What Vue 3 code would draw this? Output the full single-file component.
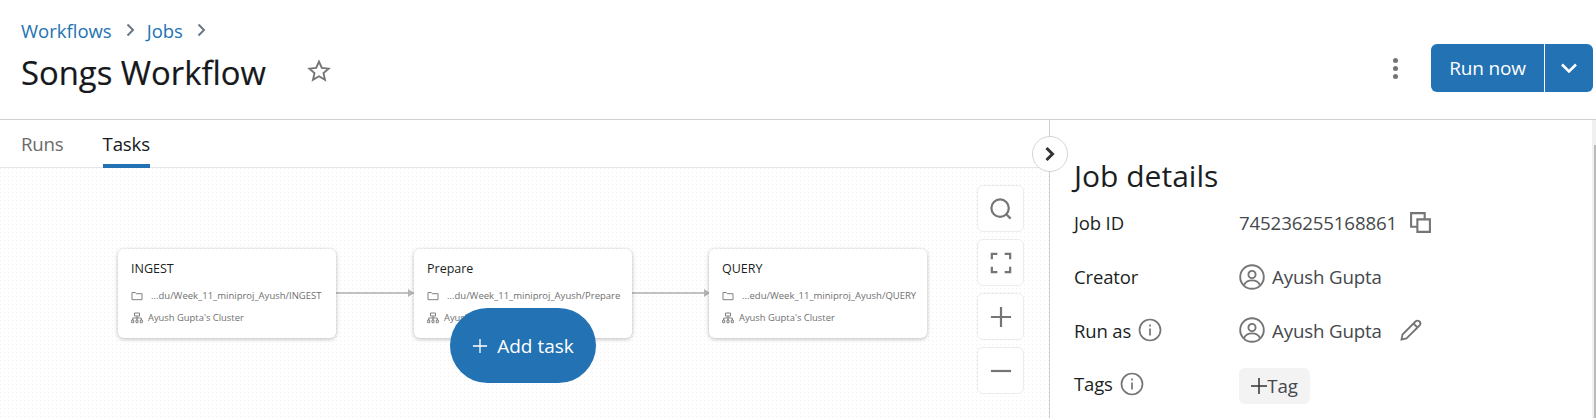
<script setup>
const nodes = [
  { name: 'INGEST', path: '...du/Week_11_miniproj_Ayush/INGEST', x: 118 },
  { name: 'Prepare', path: '...du/Week_11_miniproj_Ayush/Prepare', x: 414 },
  { name: 'QUERY', path: '...edu/Week_11_miniproj_Ayush/QUERY', x: 709 },
]
const links = [336, 632]
</script>

<template>
  <div class="page">
    <header class="head">
      <div class="head-left">
        <nav class="crumbs">
          <a>Workflows</a>
          <svg class="chev" viewBox="0 0 10 14"><path d="M1.500 1.500L7 7l-5.500 5.500" /></svg>
          <a>Jobs</a>
          <svg class="chev" viewBox="0 0 10 14"><path d="M1.500 1.500L7 7l-5.500 5.500" /></svg>
        </nav>
        <div class="title-row">
          <h1>Songs Workflow</h1>
          <svg class="star" viewBox="0 0 24 24"><path d="M12 2.600l2.800 6.300 6.800.7-5.100 4.500 1.500 6.700-6-3.500-6 3.500 1.500-6.700-5.100-4.500 6.800-.7z" /></svg>
        </div>
      </div>
      <div class="head-right">
        <div class="kebab"><i></i><i></i><i></i></div>
        <div class="run">
          <span class="run-main">Run now</span>
          <span class="run-caret"><svg viewBox="0 0 18 12"><path d="M2 2.500l7 7 7-7" /></svg></span>
        </div>
      </div>
    </header>

    <div class="body">
      <main class="main">
        <div class="tabs">
          <span class="tab">Runs</span>
          <span class="tab active">Tasks</span>
        </div>
        <div class="canvas">
          <div v-for="l in links" :key="l" class="link" :style="{ left: l + 'px' }"><b></b></div>
          <div v-for="n in nodes" :key="n.name" class="node" :style="{ left: n.x + 'px' }">
            <div class="node-name">{{ n.name }}</div>
            <div class="node-line">
              <svg class="ni" viewBox="0 0 12 12"><path d="M1 2.500h3.300l1 1.200H11v6H1z" /></svg>
              <span class="path">{{ n.path }}</span>
            </div>
            <div class="node-line">
              <svg class="ni" viewBox="0 0 12 12"><path d="M3.500 1h5v3h-5zM1.700 6h8.600M1.700 6v2M6 4v4M10.300 6v2M.7 8h2v2.700h-2zM5 8h2v2.700H5zM9.300 8h2v2.700h-2z" /></svg>
              <span class="path cl">Ayush Gupta's Cluster</span>
            </div>
          </div>
          <div class="add">
            <svg viewBox="0 0 18 18"><path d="M9 1v16M1 9h16" /></svg>
            <span>Add task</span>
          </div>
          <div class="tools">
            <div class="tool"><svg viewBox="0 0 24 24"><circle cx="11" cy="11" r="9.500" /><path d="M18 18l4.500 4.500" /></svg></div>
            <div class="tool"><svg viewBox="0 0 24 24"><path d="M2 8V2h6M16 2h6v6M22 16v6h-6M8 22H2v-6" /></svg></div>
            <div class="tool"><svg viewBox="0 0 24 24"><path d="M12 1v22M1 12h22" /></svg></div>
            <div class="tool"><svg viewBox="0 0 24 24"><path d="M1 12h22" /></svg></div>
          </div>
        </div>
      </main>

      <aside class="side">
        <button class="collapse"><svg viewBox="0 0 12 16"><path d="M2.500 2l6 6-6 6" /></svg></button>
        <h2>Job details</h2>
        <div class="row">
          <div class="label">Job ID</div>
          <div class="val">
            <span>745236255168861</span>
            <svg class="copy" viewBox="0 0 22 22"><path d="M8 15H2V2h13v6" /><path d="M8 8h12v12H8z" /></svg>
          </div>
        </div>
        <div class="row">
          <div class="label">Creator</div>
          <div class="val">
            <svg class="user" viewBox="0 0 26 26"><circle cx="13" cy="13" r="11.800" /><circle cx="13" cy="10.500" r="3.600" /><path d="M5 21c1.500-3.200 4.500-4.600 8-4.600s6.500 1.400 8 4.600" /></svg>
            <span>Ayush Gupta</span>
          </div>
        </div>
        <div class="row">
          <div class="label">Run as
            <svg class="info" viewBox="0 0 24 24"><circle cx="12" cy="12" r="10.500" /><path d="M12 10.500v7M12 6.500v2" /></svg>
          </div>
          <div class="val">
            <svg class="user" viewBox="0 0 26 26"><circle cx="13" cy="13" r="11.800" /><circle cx="13" cy="10.500" r="3.600" /><path d="M5 21c1.500-3.200 4.500-4.600 8-4.600s6.500 1.400 8 4.600" /></svg>
            <span>Ayush Gupta</span>
            <svg class="pencil" viewBox="0 0 22 22"><path d="M1.500 20.500l1-5L15.500 2.500a2.500 2.500 0 0 1 4 4L6.500 19.500zM13.500 4.500l4 4" /></svg>
          </div>
        </div>
        <div class="row">
          <div class="label">Tags
            <svg class="info" viewBox="0 0 24 24"><circle cx="12" cy="12" r="10.500" /><path d="M12 10.500v7M12 6.500v2" /></svg>
          </div>
          <div class="val">
            <span class="tag"><svg viewBox="0 0 16 16"><path d="M8 0v16M0 8h16" /></svg>Tag</span>
          </div>
        </div>
        <div class="scroll"><div class="thumb"></div></div>
      </aside>
    </div>
  </div>
</template>

<style>
html, body { margin: 0; background: #fff; overflow: hidden; }
</style>

<style scoped>
.page {
  width: 1596px; height: 418px; overflow: hidden; display: flex; flex-direction: column;
  font-family: "Open Sans", "Noto Sans", sans-serif; color: #1b1f23;
}
svg { fill: none; stroke: #757575; display: block; flex: none; }
.head {
  height: 120px; flex: none; box-sizing: border-box; border-bottom: 1px solid #cfcfcf;
  display: flex; justify-content: space-between; padding: 0 3px 0 21px;
}
.crumbs { display: flex; align-items: center; margin-top: 18px; height: 24px; font-size: 18.500px; color: #2272b4; }
.chev { width: 10px; height: 14px; margin: 0 11px 0 14px; stroke: #6b7885; stroke-width: 2; }
.title-row { display: flex; align-items: center; margin-top: 8px; height: 44px; }
h1 { margin: 0; font-size: 32.800px; font-weight: 500; color: #16191c; width: 286px; -webkit-text-stroke: .2px #16191c; }
.star { width: 24px; height: 24px; stroke-width: 1.900; margin-top: -2px; }
.head-right { display: flex; align-items: flex-start; }
.kebab { display: flex; flex-direction: column; gap: 3px; margin: 58px 33px 0 0; }
.kebab i { width: 5px; height: 5px; border-radius: 50%; background: #757575; display: block; }
.run { margin-top: 44px; width: 162px; height: 48px; display: flex; background: #2272b4; border-radius: 6px; color: #fff; font-size: 19px; align-items: stretch; }
.run-main { width: 113px; display: flex; align-items: center; justify-content: center; border-right: 1px solid #fff; letter-spacing: -.2px; }
.run-caret { flex: 1; display: flex; align-items: center; justify-content: center; }
.run-caret svg { width: 18px; height: 12px; stroke: #fff; stroke-width: 2.600; }
.body { flex: 1; display: flex; min-height: 0; }
.main { width: 1049px; flex: none; display: flex; flex-direction: column; border-right: 1px solid #cfcfcf; }
.tabs { height: 48px; flex: none; box-sizing: border-box; display: flex; gap: 39px; padding-left: 21px; border-bottom: 1px solid #e6e6e6; font-size: 18.700px; font-weight: 500; }
.tab { padding-top: 11px; color: #6b6b6b; height: 48px; box-sizing: border-box; letter-spacing: -.2px; }
.tab.active { color: #16191c; border-bottom: 4px solid #2272b4; }
.canvas {
  position: relative; flex: 1; overflow: hidden;
  background-color: #fff;
  background-image: radial-gradient(circle at .5px .5px, #eeeeee .5px, transparent .5px);
  background-size: 4px 4px;
}
.node {
  position: absolute; top: 81px; width: 218px; height: 89px; box-sizing: border-box; padding: 10px 13px;
  background: #fff; border-radius: 6px; box-shadow: 0 1px 4px rgba(0,0,0,.28);
}
.node-name { font-size: 12.500px; height: 20px; line-height: 20px; margin-bottom: 9px; color: #1b1f23; }
.node-line { display: flex; align-items: center; height: 15px; margin-bottom: 7px; color: #6f6f6f; font-size: 9.400px; }
.ni { width: 12px; height: 12px; stroke-width: .9; margin-right: 5px; }
.path { margin-left: 3px; white-space: nowrap; font-size: 9.500px; }
.path.cl { margin-left: 0; font-size: 9.400px; }
.link { position: absolute; top: 124px; width: 78px; height: 2px; background: #c2c2c2; }
.link b { position: absolute; right: 0; top: -3px; border-left: 6px solid #b5b5b5; border-top: 4px solid transparent; border-bottom: 4px solid transparent; }
.add {
  position: absolute; left: 450px; top: 140px; width: 146px; height: 75px; border-radius: 38px;
  background: #2272b4; color: #fff; display: flex; align-items: center; justify-content: center; gap: 9px; font-size: 19px;
}
.add svg { width: 16px; height: 16px; stroke: #fff; stroke-width: 1.500; }
.tools { position: absolute; left: 977px; top: 17px; display: flex; flex-direction: column; gap: 7px; }
.tool { width: 47px; height: 47px; box-sizing: border-box; border: 1px solid #ececec; border-radius: 6px; background: #fff; display: flex; align-items: center; justify-content: center; }
.tool svg { width: 22px; height: 22px; stroke-width: 2.400; }
.side { position: relative; flex: 1; box-sizing: border-box; padding: 38px 0 0 24px; }
.collapse {
  position: absolute; left: -18px; top: 16px; width: 36px; height: 36px; padding: 0; border-radius: 50%;
  background: #fff; border: 1px solid #d4d4d4; display: flex; align-items: center; justify-content: center;
}
.collapse svg { width: 12px; height: 16px; stroke: #333; stroke-width: 3; }
h2 { margin: 0 0 2px; font-size: 30px; font-weight: 500; line-height: 36px; height: 36px; color: #1b1f23; }
.row { display: flex; height: 53.700px; align-items: center; font-size: 18.700px; letter-spacing: -.15px; }
.label { width: 165px; display: flex; align-items: center; gap: 7px; color: #1b1f23; font-weight: 500; font-size: 18.500px; }
.val { display: flex; align-items: center; color: #45494d; }
.copy { width: 23px; height: 23px; margin-left: 12px; stroke-width: 2; }
.user { width: 26px; height: 26px; margin-right: 7px; stroke-width: 1.900; }
.pencil { width: 22px; height: 22px; margin-left: 18px; stroke-width: 1.800; }
.info { width: 24px; height: 24px; stroke-width: 1.700; }
.tag { width: 71px; height: 36px; margin-top: 4px; background: #f3f3f3; border-radius: 6px; display: flex; align-items: center; justify-content: center; }
.tag svg { width: 16px; height: 16px; stroke: #333; stroke-width: 1.500; }
.scroll { position: absolute; right: 0; top: 0; bottom: 0; width: 4px; background: #f0f0f0; }
.thumb { position: absolute; top: 25px; left: 2px; right: 0; bottom: 0; background: #bbb; }
</style>
